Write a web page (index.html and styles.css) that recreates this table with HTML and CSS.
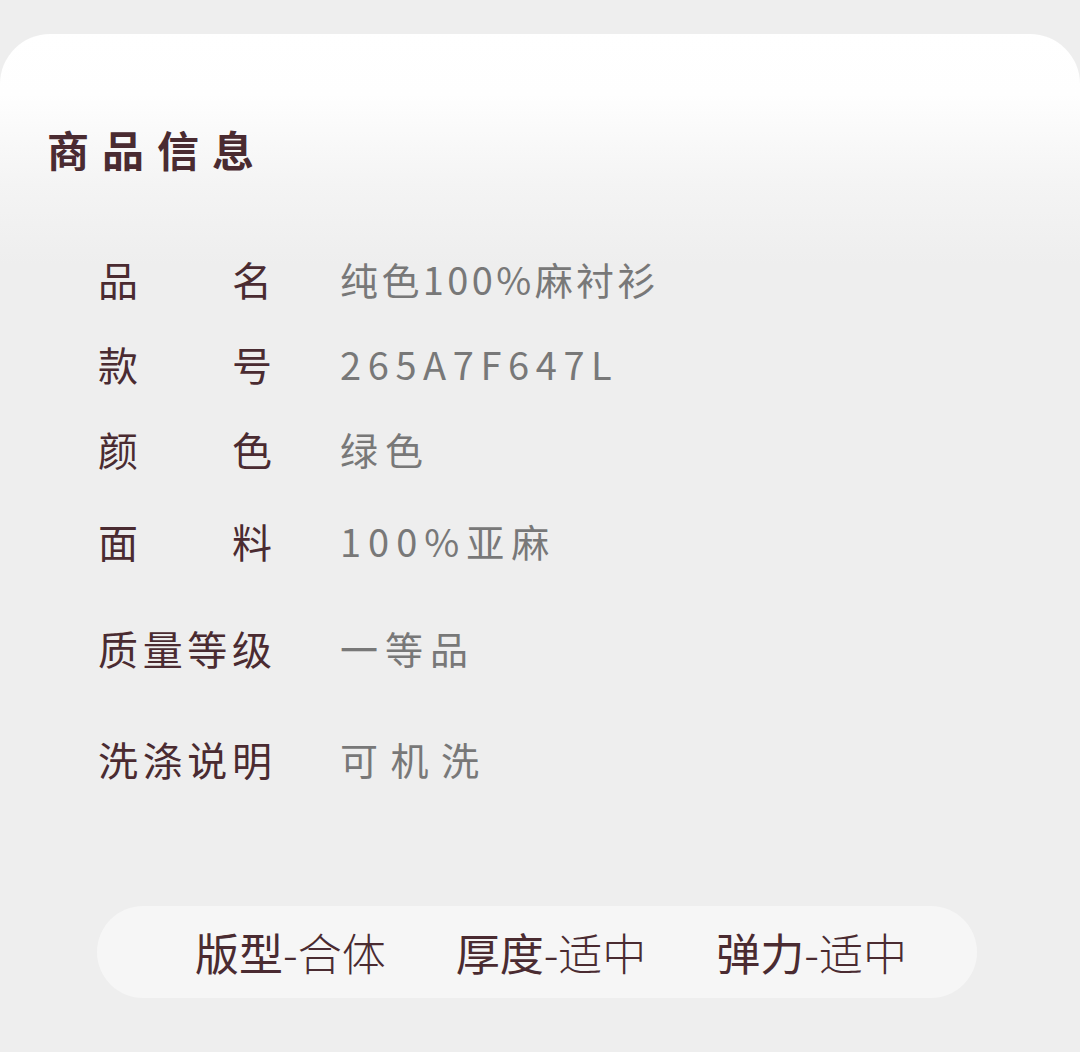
FILE: index.html
```html
<!DOCTYPE html>
<html lang="zh-CN">
<head>
    <meta charset="UTF-8">
    <title>商品信息</title>
    <link rel="stylesheet" href="styles.css">
</head>
<body>
<div class="card">
    <h1 class="title">商品信息</h1>

    <!-- basic attributes -->
    <div class="info-list">
        <div class="row">
            <span class="label">品名</span>
            <span class="value tight">纯色100%麻衬衫</span>
        </div>
        <div class="row">
            <span class="label">款号</span>
            <span class="value code">265A7F647L</span>
        </div>
        <div class="row">
            <span class="label">颜色</span>
            <span class="value">绿色</span>
        </div>
        <div class="row row-loose">
            <span class="label">面料</span>
            <span class="value">100%亚麻</span>
        </div>
        <div class="row row-wide">
            <span class="label">质量等级</span>
            <span class="value">一等品</span>
        </div>
        <div class="row row-wider">
            <span class="label">洗涤说明</span>
            <span class="value spaced">可机洗</span>
        </div>
    </div>

    <!-- fit / thickness / stretch -->
    <div class="spec-bar">
        <span class="spec"><b>版型</b>-合体</span>
        <span class="spec"><b>厚度</b>-适中</span>
        <span class="spec"><b>弹力</b>-适中</span>
    </div>
</div>
</body>
</html>
```

FILE: styles.css
```css
body {
    margin: 0;
    padding: 0;
    background-color: #eeeeee;
    font-family: "Noto Sans CJK SC", "Noto Sans", sans-serif;
    height: 1052px;
    overflow: hidden;
}

.card {
    margin-top: 34px;
    padding: 90px 0 0 0;
    border-radius: 50px 50px 0 0;
    background: linear-gradient(to bottom, #ffffff 0px, #fefefe 60px, #f4f4f4 150px, #eeeeee 230px);
}

.title {
    margin: 0 0 0 47px;
    font-size: 42px;
    line-height: 50px;
    font-weight: bold;
    letter-spacing: 13px;
    color: #4a2b31;
}

.info-list {
    margin-top: 80px;
    padding-left: 98px;
}

.row {
    display: flex;
    align-items: center;
    height: 50px;
    margin-top: 35px;
}

.row:first-child {
    margin-top: 0;
}

.row-loose {
    margin-top: 42px;
}

.row-wide {
    margin-top: 57px;
}

.row-wider {
    margin-top: 61px;
}

.label {
    width: 174px;
    font-size: 40px;
    line-height: 50px;
    color: #4a2b31;
    text-align: justify;
    text-align-last: justify;
}

.value {
    margin-left: 68px;
    font-size: 38px;
    line-height: 50px;
    color: #787878;
    letter-spacing: 7px;
}

.tight {
    letter-spacing: 3.4px;
}

.code {
    letter-spacing: 6.6px;
}

.spaced {
    letter-spacing: 12.5px;
}

.spec-bar {
    display: flex;
    align-items: center;
    gap: 70px;
    width: 782px;
    height: 92px;
    margin: 122px 0 0 97px;
    padding-left: 98px;
    border-radius: 46px;
    background-color: #f6f6f6;
}

.spec {
    font-size: 44px;
    font-weight: 300;
    color: #4a2b31;
}

.spec b {
    font-weight: normal;
}
```
